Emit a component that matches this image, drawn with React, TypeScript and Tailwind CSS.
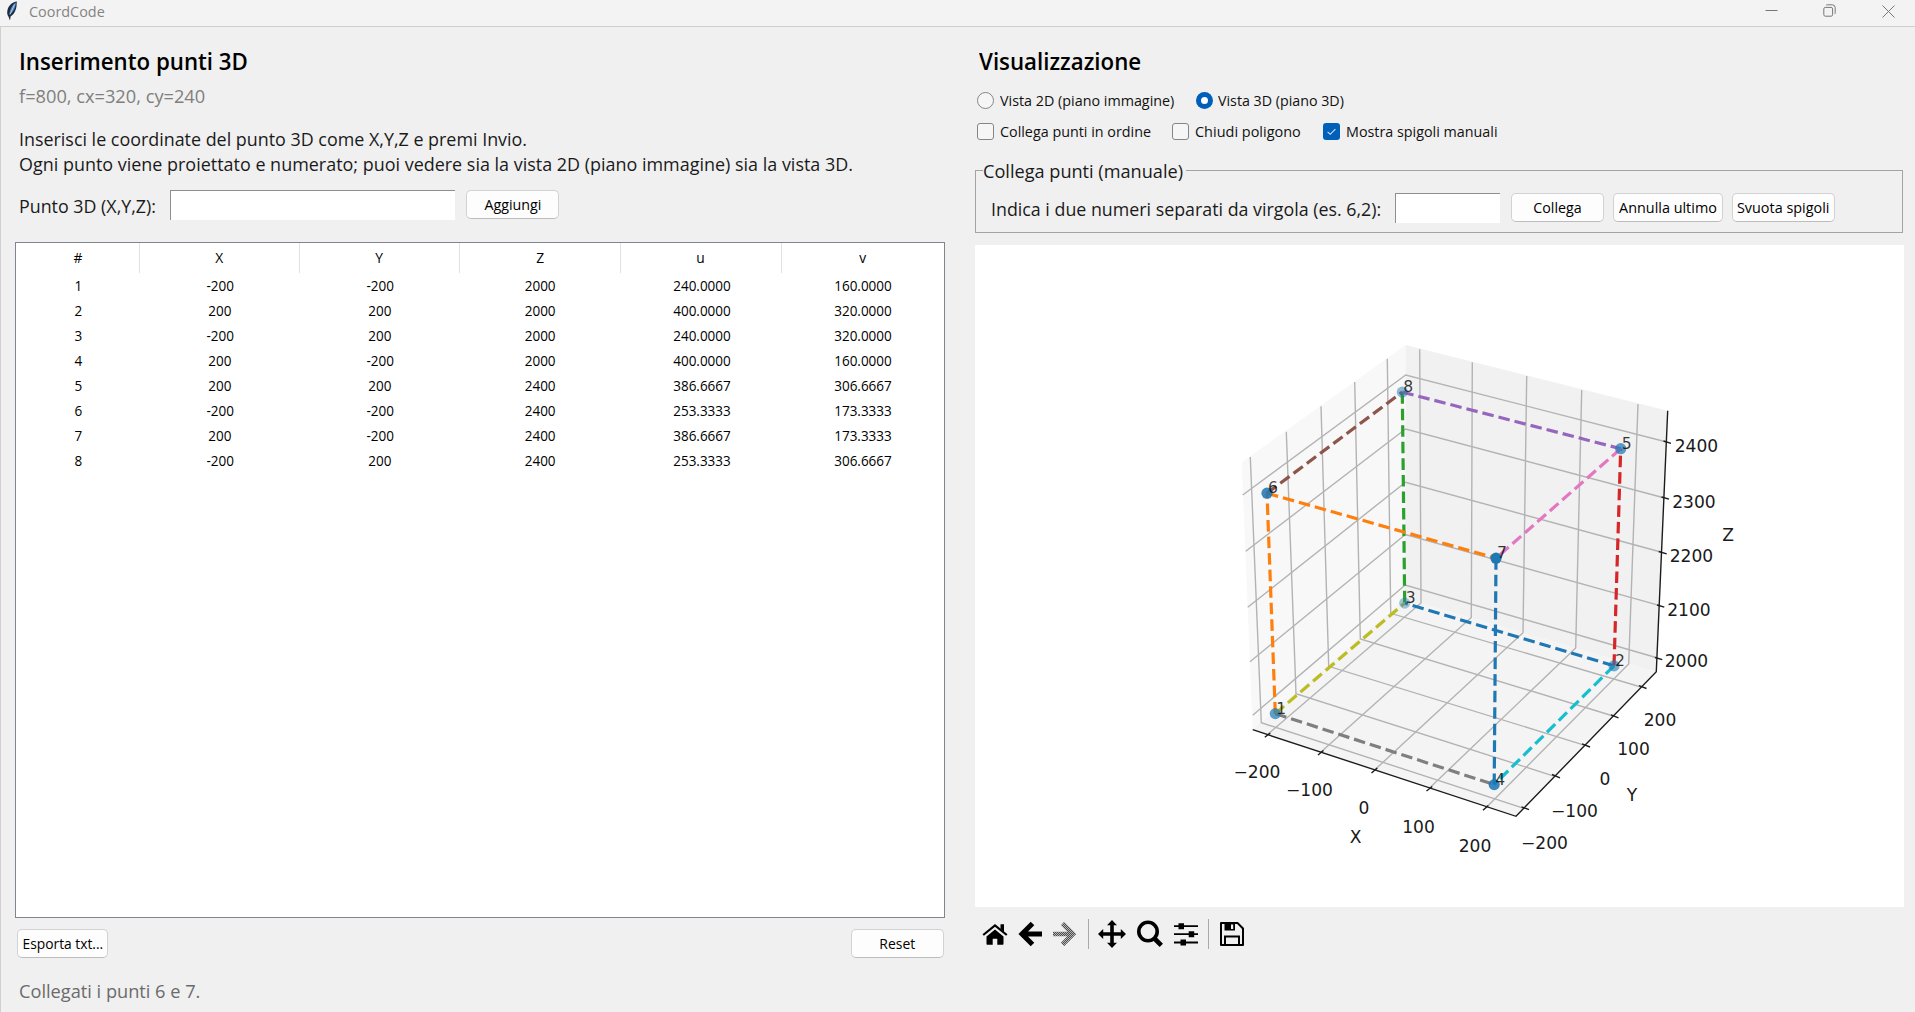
import React from "react";

const columns = ["#", "X", "Y", "Z", "u", "v"];
const rows = [
  ["1", "-200", "-200", "2000", "240.0000", "160.0000"],
  ["2", "200", "200", "2000", "400.0000", "320.0000"],
  ["3", "-200", "200", "2000", "240.0000", "320.0000"],
  ["4", "200", "-200", "2000", "400.0000", "160.0000"],
  ["5", "200", "200", "2400", "386.6667", "306.6667"],
  ["6", "-200", "-200", "2400", "253.3333", "173.3333"],
  ["7", "200", "-200", "2400", "386.6667", "173.3333"],
  ["8", "-200", "200", "2400", "253.3333", "306.6667"],
];
const grid = "grid grid-cols-[124px_160px_160px_161px_161px_1fr]";

function Small({ children, className = "" }: { children: React.ReactNode; className?: string }) {
  return <span className={`inline-block whitespace-pre text-[15px] ${className}`}>{children}</span>;
}

function Button({ label, className, text }: { label: string; className: string; text: string }) {
  return (
    <button
      className={`flex h-[29px] shrink-0 items-center justify-center rounded-[5px] border border-[#d2d2d2] border-b-[#bdbdbd] bg-[#fdfdfd] pb-px text-black ${className}`}
    >
      <Small className={`leading-[20px] ${text}`}>{label}</Small>
    </button>
  );
}

function Entry({ className }: { className: string }) {
  return <div className={`shrink-0 border-l border-t border-[#8e8e8e] bg-white ${className}`} />;
}

function CheckBox({ on = false }: { on?: boolean }) {
  return on ? (
    <span className="flex size-[17px] shrink-0 items-center justify-center rounded-[3px] bg-[#005fb8]">
      <svg viewBox="0 0 17 17" className="size-[17px]" fill="none" stroke="#d5e6f5" strokeWidth="1.1">
        <path d="M4.6 8.8l2.6 2.5 5.2-5.2" />
      </svg>
    </span>
  ) : (
    <span className="size-[17px] shrink-0 rounded-[3px] border border-[#868686] bg-[#f6f6f6]" />
  );
}

function TitleBar() {
  return (
    <header className="flex h-[27px] shrink-0 items-start border-b border-[#cfcfcf] bg-[#f3f3f3]">
      <svg viewBox="0 0 12 20" className="ml-[6px] mt-px h-[20px] w-[12px]">
        <path d="M10.8 .6C7 1 3 3.800 1.600 8.500 .8 11.500 1.200 14 2.400 15.500L4 19.500l.6-4C8 13.500 10.500 8.500 10.600 4z" fill="#1d2b3f" />
        <path d="M10 1.500C7 3 4.200 7 3.200 13.500 6.500 12 9.300 8 10 1.500z" fill="#4f86c6" />
        <path d="M8.600 3.500L4 13.500" stroke="#b9d3ef" strokeWidth=".9" />
      </svg>
      <span className="ml-[11px] inline-block origin-left scale-x-[0.96] text-[15px] leading-[23px] text-[#838383]">CoordCode</span>
      <div className="ml-auto flex items-start pt-[4px] text-[#777]">
        <svg viewBox="0 0 13 13" className="mr-[45px] size-[13px]" fill="none" stroke="currentColor"><path d="M.5 6.500h12" /></svg>
        <svg viewBox="0 0 13 13" className="mr-[46px] size-[13px]" fill="none" stroke="currentColor">
          <rect x=".8" y="3.400" width="8.800" height="8.800" rx="1.500" />
          <path d="M3 1.500Q3.400 .8 4.400 .8H9.200Q12.200 .8 12.200 3.800V8.600Q12.200 9.600 11.500 10" />
        </svg>
        <svg viewBox="0 0 13 13" className="mr-[20px] mt-px size-[13px]" fill="none" stroke="currentColor"><path d="M.5 .5l12 12M12.500 .5l-12 12" /></svg>
      </div>
    </header>
  );
}

function LeftPanel() {
  return (
    <section className="flex w-[943px] flex-col pl-[14px]">
      <h1 className="ml-[4px] mt-[19px] h-[32px] w-max origin-left scale-x-[0.99] whitespace-nowrap text-[22.500px] font-semibold leading-[32px] text-black">Inserimento punti 3D</h1>
      <p className="ml-[4px] mt-[5px] w-max origin-left scale-x-[0.985] whitespace-nowrap text-[18.500px] leading-[25px] text-[#7f7f7f]">f=800, cx=320, cy=240</p>
      <p className="ml-[4px] mt-[18px] w-max origin-left scale-x-[0.967] whitespace-nowrap text-[18.500px] leading-[25px] text-[#1a1a1a]">Inserisci le coordinate del punto 3D come X,Y,Z e premi Invio.</p>
      <p className="ml-[4px] w-max origin-left scale-x-[0.97] whitespace-nowrap text-[18.500px] leading-[25px] text-[#1a1a1a]">Ogni punto viene proiettato e numerato; puoi vedere sia la vista 2D (piano immagine) sia la vista 3D.</p>
      <div className="mt-[14px] flex h-[30px] items-start">
        <div className="ml-[4px] w-[151px] pt-[3px]">
          <span className="inline-block origin-left scale-x-[0.964] whitespace-nowrap text-[18.500px] leading-[25px] text-[#1a1a1a]">Punto 3D (X,Y,Z):</span>
        </div>
        <Entry className="h-[30px] w-[285px]" />
        <Button label="Aggiungi" className="ml-[11px] w-[93px]" text="scale-x-[0.95]" />
      </div>
      <div className="mt-[22px] h-[676px] w-[930px] border border-[#7f858c] bg-white">
        <div className={`${grid} h-[30px]`}>
          {columns.map((c) => (
            <div key={c} className="flex justify-center border-r border-[#e2e2e2] pt-[3px] text-black last:border-r-0">
              <Small className="scale-x-[0.92] leading-[22px]">{c}</Small>
            </div>
          ))}
        </div>
        {rows.map((r) => (
          <div key={r[0]} className={`${grid} h-[25px]`}>
            {r.map((v, i) => (
              <div key={i} className="text-center text-black">
                <Small className="scale-x-[0.9] leading-[23px]">{v}</Small>
              </div>
            ))}
          </div>
        ))}
      </div>
      <div className="mt-[11px] flex justify-between pl-[2px]">
        <Button label="Esporta txt..." className="w-[91px]" text="scale-x-[0.92]" />
        <Button label="Reset" className="w-[93px]" text="scale-x-[0.93]" />
      </div>
      <p className="ml-[4px] mt-[20px] w-max origin-left scale-x-[0.983] whitespace-nowrap text-[18.500px] leading-[25px] text-[#6b6b6b]">Collegati i punti 6 e 7.</p>
    </section>
  );
}

/* Endpoints of the pane grid: wall end, shared wall edge, axis end. */
const yLines = [
  "1250.3,457 1261.3,722.7 1524,808.3",
  "1286.3,431.7 1296,693.7 1554.7,776.3",
  "1321,406.3 1328.7,666.3 1585,745.3",
  "1354.7,382 1360.3,639 1613.3,716",
  "1387.3,358.7 1390.7,613.3 1641,687",
];
const xLines = [
  "1419.7,349.3 1421,603 1267.3,734.7",
  "1472.3,362.3 1471.3,617.5 1320.7,752.3",
  "1526.7,376 1523,632.7 1374.3,770.3",
  "1581.7,390 1575.7,648 1429.3,788.3",
  "1638,404 1628.7,664 1486,807.7",
];
const zLines = [
  "1242.7,495 1405.7,375 1665.7,441.7",
  "1245.7,551.3 1405.6,429 1663.7,497.7",
  "1247.7,607.3 1405.5,482.3 1661.7,552.3",
  "1250,661.7 1405.4,534.5 1660,605.7",
  "1252.7,715.3 1405.2,585 1657.7,658",
];
const ticks = [
  "M1270.300 733L1264.800 737.300", "M1323.500 750.500L1318 755", "M1377.300 768L1371.500 773", "M1432.300 786.500L1426.500 791", "M1488.300 805.500L1483 810.300",
  "M1521.500 806.800L1529 809.700", "M1552 774.500L1560 777.800", "M1582 743.800L1590 747", "M1611 714.800L1618.500 717.800", "M1639 685.700L1646.500 688.500",
  "M1663.500 441L1671 443.300", "M1661.500 497L1669 499.200", "M1658.700 551.500L1666.700 553.800", "M1657 605L1664.300 607.200", "M1655 657.500L1662.300 659.700",
];
const P: Record<string, [number, number, number]> = {
  "1": [1275.3, 713.6, 0.7],
  "2": [1614, 665.8, 0.6],
  "3": [1404.7, 603.1, 0.4],
  "4": [1494.2, 784.6, 0.88],
  "5": [1620.7, 448.7, 0.72],
  "6": [1267, 493.2, 0.88],
  "7": [1496, 558.2, 1],
  "8": [1402.3, 392.1, 0.5],
};
const edges: [string, string, string][] = [
  ["2", "3", "#1f77b4"],
  ["1", "6", "#ff7f0e"],
  ["8", "3", "#2ca02c"],
  ["2", "5", "#d62728"],
  ["8", "5", "#9467bd"],
  ["6", "8", "#8c564b"],
  ["5", "7", "#e377c2"],
  ["1", "4", "#7f7f7f"],
  ["1", "3", "#bcbd22"],
  ["2", "4", "#17becf"],
  ["7", "4", "#1f77b4"],
  ["6", "7", "#ff7f0e"],
];
const labels: [string, number, number][] = [
  ["−200", 1257, 778], ["−100", 1309.500, 795.500], ["0", 1364, 814], ["100", 1418.500, 833], ["200", 1475, 851.500],
  ["−200", 1544.500, 848.500], ["−100", 1574.500, 816.500], ["0", 1605, 785], ["100", 1633.500, 755], ["200", 1660, 726],
  ["2400", 1696.500, 452], ["2300", 1694, 507.500], ["2200", 1691.500, 562], ["2100", 1689, 616], ["2000", 1686.500, 667],
  ["X", 1355.500, 843], ["Y", 1632, 800.500], ["Z", 1728, 541],
];

function Plot() {
  return (
    <svg viewBox="975 245 928 662" className="h-[662px] w-[928px]" fontFamily="DejaVu Sans, sans-serif">
      <path d="M1241.700 462.300L1405.700 345V598.700L1252.700 729.700z" fill="#f8f8f8" />
      <path d="M1405.700 345L1667.700 410.700L1656.300 671.700L1405 598.700z" fill="#f1f1f1" />
      <path d="M1405 598.700L1656.300 671.700L1516 816.300L1252.700 729.700z" fill="#f4f4f4" />
      <g fill="none" stroke="#b3b3b3" strokeWidth="1.400">
        {[...xLines, ...yLines, ...zLines].map((p) => <polyline key={p} points={p} />)}
      </g>
      <path d="M1252.700 729.700L1516 816.300L1656.300 671.700L1667.700 410.700" fill="none" stroke="#1c1c1c" strokeWidth="1.400" />
      <path d={ticks.join("")} stroke="#1c1c1c" strokeWidth="1.400" />
      {edges.map(([a, b, c]) => (
        <line key={a + b} x1={P[a][0]} y1={P[a][1]} x2={P[b][0]} y2={P[b][1]} stroke={c} strokeWidth="3.200" strokeDasharray="11.56 5" />
      ))}
      {Object.entries(P).map(([k, [x, y, a]]) => <circle key={k} cx={x} cy={y} r="5.600" fill="#1f77b4" fillOpacity={a} />)}
      <g fontSize="15.600" fill="#000" fillOpacity=".78">
        {Object.entries(P).map(([k, [x, y]]) => <text key={k} x={x + 1} y={y}>{k}</text>)}
      </g>
      <g fontSize="17.100" fill="#1a1a1a" textAnchor="middle">
        {labels.map(([t, x, y], i) => <text key={i} x={x} y={y}>{t}</text>)}
      </g>
    </svg>
  );
}

function Toolbar() {
  return (
    <div className="flex h-[54px] items-center pl-[7px] text-black">
      <svg viewBox="0 0 26 26" className="size-[26px]" fill="currentColor">
        <path d="M4.500 15.500L13 8.500l8.500 7V23q0 .8-.8 .8h-5.400v-6h-4.600v6H5.300q-.8 0-.8-.8z" />
        <path d="M1.200 14L13 4.400l11.800 9.600" fill="none" stroke="currentColor" strokeWidth="2.200" />
        <path d="M18.500 3.300H22V11l-3.500-3z" />
      </svg>
      <svg viewBox="0 0 26 26" className="ml-[9px] size-[26px]" fill="none" stroke="currentColor" strokeWidth="5">
        <path d="M15.500 2.500L5 13l10.500 10.500M5 13h20" />
      </svg>
      <svg viewBox="0 0 26 26" className="ml-[9px] size-[26px]" fill="none" strokeWidth="4.600">
        <defs>
          <pattern id="stipple" width="2" height="2" patternUnits="userSpaceOnUse">
            <rect width="2" height="2" fill="#b5b5b5" />
            <rect width="1" height="1" fill="#4d4d4d" />
            <rect x="1" y="1" width="1" height="1" fill="#4d4d4d" />
          </pattern>
        </defs>
        <path d="M10.500 2.500L21 13 10.500 23.500M20.500 13.010L1 13" stroke="url(#stipple)" />
      </svg>
      <div className="ml-[10px] h-[30px] w-px bg-[#a9a9a9]" />
      <svg viewBox="0 0 28 28" className="ml-[9px] size-[28px]" fill="currentColor">
        <path d="M14 0l5 5.200h-3.200v7h7V9L28 14l-5.200 5v-3.200h-7v7H19L14 28l-5-5.200h3.200v-7h-7V19L0 14l5.200-5v3.200h7v-7H9z" />
      </svg>
      <svg viewBox="0 0 28 28" className="ml-[10px] size-[28px]" fill="none" stroke="currentColor">
        <circle cx="12" cy="11.500" r="9.200" strokeWidth="3.600" />
        <path d="M18.500 18.500l6.800 6.800" strokeWidth="4.600" />
      </svg>
      <svg viewBox="0 0 26 26" className="ml-[9px] size-[26px]" fill="currentColor">
        <path d="M1 4.200h24v1.800H1zM1 12.200h24v1.800H1zM1 20.600h24v1.800H1zM5.500 2.200h5.500v6H5.500zM15.700 10.200h5.500v6h-5.500zM7.500 18.600H13v6H7.500z" />
      </svg>
      <div className="ml-[9px] h-[30px] w-px bg-[#a9a9a9]" />
      <svg viewBox="0 0 26 26" className="ml-[10px] size-[26px]" fill="none" stroke="currentColor" strokeWidth="2">
        <path d="M2 2h16.500l5.500 5.500V24H2z" strokeLinejoin="round" />
        <path d="M6 24v-8.500h14V24" />
        <path d="M5.500 2h10.500v7.500H5.500z" fill="currentColor" stroke="none" />
        <path d="M12 3.500h2.200v4.500H12z" fill="#f0f0f0" stroke="none" />
      </svg>
    </div>
  );
}

function RightPanel() {
  return (
    <section className="ml-[31px] flex w-[929px] flex-col">
      <h2 className="ml-[4px] mt-[19px] h-[32px] w-max origin-left scale-x-[0.99] whitespace-nowrap text-[22.500px] font-semibold leading-[32px] text-black">Visualizzazione</h2>
      <div className="ml-[2px] mt-[12px] flex h-[20px] items-center text-[#111]">
        <span className="size-[17px] shrink-0 rounded-full border border-[#868686] bg-[#f6f6f6]" />
        <div className="ml-[6px] w-[196px]"><Small className="origin-left scale-x-[0.955] leading-[20px]">Vista 2D (piano immagine)</Small></div>
        <span className="flex size-[17px] shrink-0 items-center justify-center rounded-full bg-[#005fb8]">
          <span className="size-[7px] rounded-full bg-white" />
        </span>
        <div className="ml-[5px]"><Small className="origin-left scale-x-[0.95] leading-[20px]">Vista 3D (piano 3D)</Small></div>
      </div>
      <div className="ml-[2px] mt-[11px] flex h-[20px] items-center text-[#111]">
        <CheckBox />
        <div className="ml-[6px] w-[172px]"><Small className="origin-left scale-x-[0.955] leading-[20px]">Collega punti in ordine</Small></div>
        <CheckBox />
        <div className="ml-[6px] w-[128px]"><Small className="origin-left scale-x-[0.965] leading-[20px]">Chiudi poligono</Small></div>
        <CheckBox on />
        <div className="ml-[6px]"><Small className="origin-left scale-x-[0.955] leading-[20px]">Mostra spigoli manuali</Small></div>
      </div>
      <fieldset className="mt-[17px] h-[75px] w-[928px] border border-[#a3a3a3] pl-[7px]">
        <legend className="h-[25px] w-[203px] whitespace-nowrap">
          <span className="inline-block origin-left scale-x-[0.98] text-[18.500px] leading-[25px] text-[#1a1a1a]">Collega punti (manuale)</span>
        </legend>
        <div className="mt-[10px] flex h-[30px] items-start">
          <div className="ml-[8px] w-[404px] pt-[3px]">
            <span className="inline-block origin-left scale-x-[0.963] whitespace-nowrap text-[18.500px] leading-[25px] text-[#1a1a1a]">Indica i due numeri separati da virgola (es. 6,2):</span>
          </div>
          <Entry className="h-[30px] w-[105px]" />
          <Button label="Collega" className="ml-[11px] w-[93px]" text="scale-x-[0.95]" />
          <Button label="Annulla ultimo" className="ml-[9px] w-[110px]" text="scale-x-[0.96]" />
          <Button label="Svuota spigoli" className="ml-[9px] w-[103px]" text="scale-x-[0.96]" />
        </div>
      </fieldset>
      <div className="mt-[12px] h-[662px] w-[929px] bg-white"><Plot /></div>
      <Toolbar />
    </section>
  );
}

export default function App() {
  return (
    <div className="flex h-[1012px] w-[1915px] flex-col overflow-hidden bg-[#f0f0f0] font-['Open_Sans','Noto_Sans',sans-serif]">
      <TitleBar />
      <main className="flex min-h-0 flex-1 border-l border-[#d0d0d0]">
        <LeftPanel />
        <RightPanel />
      </main>
    </div>
  );
}
